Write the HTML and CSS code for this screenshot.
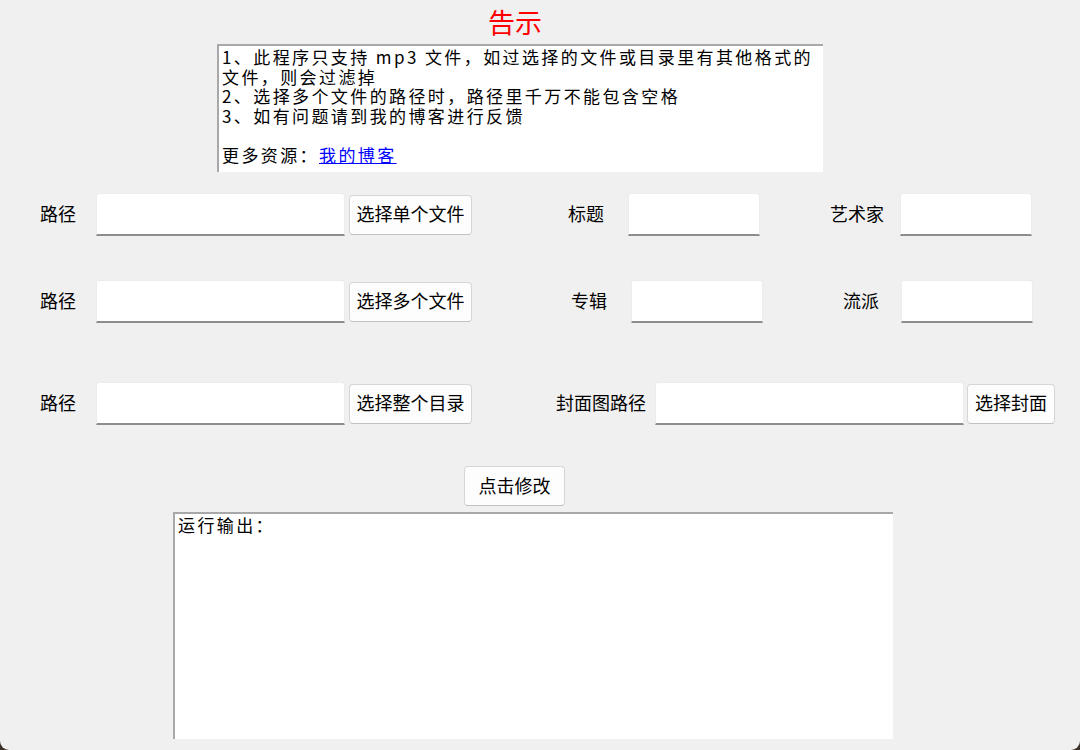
FILE: index.html
```html
<!DOCTYPE html>
<html lang="zh-CN">
<head>
<meta charset="utf-8">
<title>MP3 标签修改</title>
<link rel="stylesheet" href="styles.css">
</head>
<body>
<div class="window">
  <h1 class="title">告示</h1>
  <div class="notice">
    <div class="line">1、此程序只支持 mp3 文件，如过选择的文件或目录里有其他格式的</div>
    <div class="line">文件，则会过滤掉</div>
    <div class="line">2、选择多个文件的路径时，路径里千万不能包含空格</div>
    <div class="line">3、如有问题请到我的博客进行反馈</div>
    <div class="line">&nbsp;</div>
    <div class="line">更多资源：<a class="link" href="#">我的博客</a></div>
  </div>

  <div class="row row1">
    <span class="lbl lbl-path">路径</span>
    <input class="entry entry-path" type="text">
    <button class="btn btn-pick">选择单个文件</button>
    <span class="lbl lbl-title">标题</span>
    <input class="entry entry-small" type="text">
    <span class="lbl lbl-artist">艺术家</span>
    <input class="entry entry-small" type="text">
  </div>

  <div class="row row2">
    <span class="lbl lbl-path">路径</span>
    <input class="entry entry-path" type="text">
    <button class="btn btn-pick">选择多个文件</button>
    <span class="lbl lbl-album">专辑</span>
    <input class="entry entry-small" type="text">
    <span class="lbl lbl-genre">流派</span>
    <input class="entry entry-small" type="text">
  </div>

  <div class="row row3">
    <span class="lbl lbl-path">路径</span>
    <input class="entry entry-path" type="text">
    <button class="btn btn-pick">选择整个目录</button>
    <span class="lbl lbl-cover">封面图路径</span>
    <input class="entry entry-cover" type="text">
    <button class="btn btn-cover">选择封面</button>
  </div>

  <div class="actions">
    <button class="btn btn-run">点击修改</button>
  </div>

  <div class="output">运行输出：</div>
</div>
</body>
</html>
```

FILE: styles.css
```css
html {
  background: #3b3129;
}
body {
  margin: 0;
  width: 1080px;
  height: 750px;
  overflow: hidden;
  font-family: "Noto Sans CJK SC", "Noto Sans", sans-serif;
}
.window {
  width: 1080px;
  height: 750px;
  background: #f0f0f0;
  border-radius: 0 0 9px 9px;
  overflow: hidden;
}
.title {
  margin: 0 0 0 217px;
  width: 606px;
  height: 44px;
  box-sizing: border-box;
  padding-right: 10px;
  text-align: center;
  color: #ff0000;
  font-size: 27px;
  font-weight: normal;
  line-height: 44px;
}
.notice {
  margin-left: 217px;
  width: 606px;
  height: 128px;
  box-sizing: border-box;
  background: #ffffff;
  border-top: 2px solid #a8a8a8;
  border-left: 2px solid #a8a8a8;
  padding: 1px 0 0 3px;
  font-size: 17px;
  letter-spacing: 2.4px;
  line-height: 19.6px;
  color: #000;
  white-space: nowrap;
}
.line {
  height: 19.6px;
}
.link {
  color: #0000ff;
  text-decoration: underline;
}
.row {
  display: flex;
  align-items: center;
  height: 43px;
  padding-left: 20px;
}
.row1 { margin-top: 21px; }
.row2 { margin-top: 44px; }
.row3 { margin-top: 59px; }
.lbl {
  font-size: 18px;
  line-height: 24px;
  padding-bottom: 3px;
  color: #000;
  box-sizing: border-box;
  white-space: nowrap;
}
.lbl-path { width: 76px; text-align: center; }
.lbl-title { width: 156px; padding-left: 96px; }
.lbl-artist { width: 140px; padding-left: 70px; }
.lbl-album { width: 159px; padding-left: 99px; }
.lbl-genre { width: 138px; padding-left: 80px; }
.lbl-cover { width: 183px; padding-left: 84px; }
.entry {
  height: 43px;
  box-sizing: border-box;
  margin: 0;
  padding: 0 6px;
  background: #ffffff;
  border: 1px solid #ececec;
  border-bottom: 2px solid #8c8c8c;
  border-radius: 3px 3px 0 0;
  outline: none;
  font-family: inherit;
  font-size: 16px;
}
.entry-path { width: 249px; }
.entry-small { width: 132px; }
.entry-cover { width: 309px; }
.btn {
  height: 40px;
  box-sizing: border-box;
  margin: 0;
  padding: 0 0 3px 0;
  background: #fdfdfd;
  border: 1px solid #d6d6d6;
  border-bottom-color: #c2c2c2;
  border-radius: 4px;
  font-family: inherit;
  font-size: 18px;
  color: #000;
  white-space: nowrap;
}
.btn-pick { width: 123px; margin-left: 4px; }
.btn-cover { width: 88px; margin-left: 3px; }
.actions {
  margin-top: 41px;
  padding-left: 464px;
  display: flex;
}
.btn-run { width: 101px; }
.output {
  margin: 6px 0 0 173px;
  width: 720px;
  height: 227px;
  box-sizing: border-box;
  background: #ffffff;
  border-top: 2px solid #a8a8a8;
  border-left: 2px solid #a8a8a8;
  padding: 1px 0 0 3px;
  font-size: 17px;
  letter-spacing: 2.4px;
  line-height: 19.6px;
  color: #000;
}
```
